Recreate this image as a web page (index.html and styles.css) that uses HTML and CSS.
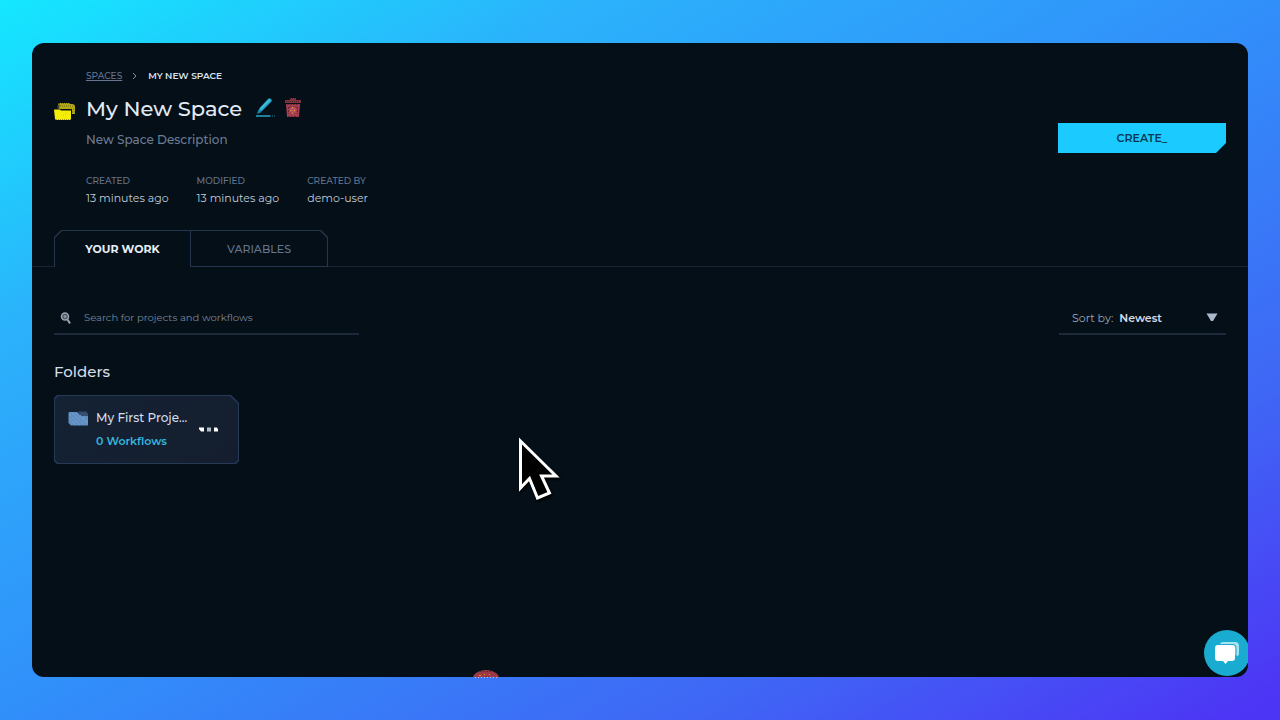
FILE: index.html
```html
<!DOCTYPE html>
<html lang="en">
<head>
<meta charset="utf-8">
<meta name="viewport" content="width=device-width, initial-scale=1">
<title>My New Space</title>
<link rel="stylesheet" href="styles.css">
</head>
<body>
<div class="window">
  <header class="header">
    <nav class="breadcrumb" aria-label="Breadcrumb">
      <a class="breadcrumb-link" href="#">SPACES</a>
      <svg class="chevron" width="6" height="8" viewBox="0 0 6 8" aria-hidden="true"><path d="M1 1 4 4 1 7" fill="none" stroke="#8090a8"/></svg>
      <span class="breadcrumb-current">MY NEW SPACE</span>
    </nav>
    <div class="header-row">
      <div class="heading">
        <div class="title-row">
          <svg class="space-icon" width="22" height="20" viewBox="0 0 22 20" aria-hidden="true">
            <path d="M4 8V4q0-2 2-2h9l1 1h2q3 0 3 3v7h-3V8z" fill="#b5aa12"/>
            <path d="M5 2.500h11M6 5h14M17 8h4M18 11h3" stroke="#6c6818" stroke-dasharray="1 1" fill="none"/>
            <path d="M3.500 8V4.500l2-1.500v5z" fill="#4b4a2c"/>
            <path d="M0 8.500h6l1 1h10V18l-1 1H2l-1-1z" fill="#f4ed05"/>
            <path d="M2 18.500h14" stroke="#a49b16" stroke-dasharray="1 1"/>
            <path d="M9 14.500l5-3" stroke="#d0c80c" stroke-dasharray="1 2"/>
          </svg>
          <h1 class="title">My New Space</h1>
          <button class="icon-button" type="button" aria-label="Edit space">
            <svg width="19" height="20" viewBox="0 0 19 20"><path d="m2 14 2-4.500 8-8.500q1.500-1.500 3 0 1.500 1.500 0 3l-9 9z" fill="#27a5c8"/><path d="m4.500 11 9-9" stroke="#61d9ef"/><path d="m1 16 1.500-4.500L6 14z" fill="#1b87a5"/><path d="M0 18h14" stroke="#25a6c8" stroke-width="1.500"/><path d="M14 18h5" stroke="#1b7f9c" stroke-dasharray="1 1"/></svg>
          </button>
          <button class="icon-button" type="button" aria-label="Delete space">
            <svg width="16" height="20" viewBox="0 0 16 20"><path d="M5 2V0h6v2h5v3H0V2z" fill="#87333d"/><path d="M1 3.500h14M5 .5h6" stroke="#4d202a" stroke-dasharray="1 1"/><path d="M1 6h14l-1 13H2z" fill="#a43f51"/><path d="M2 6.500h12M4 9h9M3 18.500h10M3.500 9v7M12.500 9v7" stroke="#6c2938" stroke-dasharray="2 1"/><circle cx="8" cy="12" r="3" fill="#bd5261"/><path d="M5 12.500h1m3 0h1m-3-3h1m-1 6h1" stroke="#d39a24"/></svg>
          </button>
        </div>
        <p class="description">New Space Description</p>
      </div>
      <button class="create" type="button">CREATE_</button>
    </div>
    <dl class="meta">
      <div class="meta-item"><dt>CREATED</dt><dd>13 minutes ago</dd></div>
      <div class="meta-item"><dt>MODIFIED</dt><dd>13 minutes ago</dd></div>
      <div class="meta-item"><dt>CREATED BY</dt><dd>demo-user</dd></div>
    </dl>
  </header>
  <div class="tab-bar">
    <div class="tabs" role="tablist">
      <button class="tab tab-active" type="button" role="tab" aria-selected="true">YOUR WORK</button>
      <button class="tab" type="button" role="tab" aria-selected="false">VARIABLES</button>
    </div>
  </div>
  <main class="content">
    <div class="filters">
      <label class="search">
        <svg width="12" height="14" viewBox="0 0 12 14" aria-hidden="true"><circle cx="5" cy="5.500" r="3.500" fill="#485463" stroke="#98a4b3" stroke-width="1.500"/><circle cx="5" cy="5.500" r="1.500" fill="#8995a4"/><path d="m7.500 8.500 2.500 4" stroke="#98a4b3" stroke-width="2"/></svg>
        <input class="search-input" type="search" aria-label="Search for projects and workflows" placeholder="Search for projects and workflows">
      </label>
      <div class="sort">
        <label for="sort">Sort by:</label>
        <select class="sort-select" id="sort"><option>Newest</option><option>Oldest</option></select>
        <svg class="sort-arrow" width="12" height="9" viewBox="0 0 12 9" aria-hidden="true"><path d="M.5.5h11l-4.500 7.500H5z" fill="#aab8c9"/></svg>
      </div>
    </div>
    <h2 class="section-title">Folders</h2>
    <div class="folders">
      <article class="card">
        <div class="card-inner">
          <svg class="folder-icon" width="21" height="15" viewBox="0 0 21 15" aria-hidden="true"><path d="M1 1h8l2 2h9v11.500H3L.5 12V2z" fill="#5f8fc2"/><path d="M10 .5h8l2 2V5H12z" fill="#334e70"/><path d="m1 3 11 11M1 7l7 7M4 2l13 12M8 2l12 11M12 4l8 7" stroke="#86a9cf" stroke-dasharray="1 1"/></svg>
          <div class="card-text">
            <h3 class="card-title">My First Proje...</h3>
            <p class="card-count">0 Workflows</p>
          </div>
          <button class="more" type="button" aria-label="More actions"><svg width="20" height="5" viewBox="0 0 20 5"><path d="M0 .5h5v4H2L0 2z" fill="#fff"/><path d="M8 .5h4v4H8z" fill="#b8bec8"/><path d="M15 .5h3l1 2v2h-4z" fill="#fff"/></svg></button>
        </div>
      </article>
    </div>
  </main>
  <button class="chat" type="button" aria-label="Open chat">
    <svg width="24" height="24" viewBox="0 0 24 24"><path d="M5 4q0-3 3-3h12q4 0 4 4v7q0 3-2 3" fill="#a8e4ef"/><path d="M5 3.500h13q3 0 3 3V17" fill="none" stroke="#1aabd0"/><path d="M3 4h14q3 0 3 3v10q0 3-3 3h-4l-2.500 3L8 20H3q-3 0-3-3V7q0-3 3-3z" fill="#fff"/></svg>
  </button>
</div>
<svg class="pointer" width="46" height="68" viewBox="0 0 46 68" aria-hidden="true"><path d="M4.500 7v47l9-9.500 8 19.500 12-5-8-17H40z" fill="#000" stroke="#fff" stroke-width="3"/></svg>
<svg class="blob" width="26" height="9" viewBox="0 0 26 9" aria-hidden="true"><path d="M0 7q1-4 7-6 6-2 12 0 6 2 7 6z" fill="#9c3944"/><path d="M7 1.500h12" stroke="#6c2932" stroke-dasharray="2 1"/><path d="M6 5.500h2m3-1h1m4 0h1" stroke="#d39a24"/><path d="M2 7.500h22" stroke="#f0b8d8" stroke-dasharray="1 2"/></svg>
</body>
</html>
```
FILE: styles.css
```css
* { box-sizing: border-box; }
body {
  margin: 0;
  min-height: 100vh;
  padding: 43px 32px;
  display: flex;
  position: relative;
  font-family: Montserrat, Inter, sans-serif;
  color: #d5deea;
  background: linear-gradient(to bottom right, #14e8ff 0%, #2bb2fb 23%, #318ffa 50%, #3f66f5 77%, #4d35f5 98%);
}
button, input, select { font: inherit; color: inherit; border: 0; padding: 0; background: none; }
h1, h2, h3, p, dl, dd { margin: 0; }
svg { display: block; flex: none; }
.window {
  flex: 1;
  min-width: 0;
  position: relative;
  overflow: hidden;
  border-radius: 12px;
  background: #040f18;
}
.header { padding: 26px 22px 0 54px; }
.breadcrumb { display: flex; align-items: center; gap: 10px; font-size: 9px; line-height: 14px; font-weight: 500; }
.breadcrumb-link { color: #65758e; }
.breadcrumb-current { font-weight: 600; color: #dce4ee; }
.header-row { display: flex; justify-content: space-between; }
.heading { padding-top: 10px; }
.title-row { display: flex; align-items: center; margin-left: -32px; }
.space-icon { margin: 4px 10px 0 0; }
.title { margin-right: 14px; font-size: 21px; line-height: 32px; font-weight: 500; color: #e2eaf4; }
.icon-button { margin: 0 10px 2px 0; cursor: pointer; }
.description { margin-top: 5px; font-size: 12px; line-height: 20px; font-weight: 500; color: #6d7c94; }
.create {
  align-self: flex-end;
  width: 168px;
  height: 30px;
  margin-bottom: -3px;
  background: #1bcaff;
  color: #073852;
  font-size: 11px;
  font-weight: 600;
  clip-path: polygon(0 0, 100% 0, 100% 20px, calc(100% - 10px) 100%, 0 100%);
}
.meta { display: flex; gap: 28px; margin-top: 24px; }
.meta dt { font-size: 9px; line-height: 14px; font-weight: 500; color: #65758e; }
.meta dd { font-size: 11px; line-height: 20px; color: #c2ccd9; }
.tab-bar { display: flex; margin-top: 22px; padding-left: 22px; border-bottom: 1px solid #182234; }
.tabs {
  display: grid;
  grid-template-columns: 135px 136px;
  gap: 1px;
  align-items: start;
  padding: 1px 1px 0;
  margin-bottom: -1px;
  background: #26354e;
  clip-path: polygon(0 7px, 7px 0, calc(100% - 7px) 0, 100% 7px, 100% 100%, 0 100%);
}
.tab { height: 35px; background: #040f18; color: #65758e; font-size: 11px; font-weight: 500; }
.tab:first-child { height: 36px; clip-path: polygon(0 7px, 7px 0, 100% 0, 100% 100%, 0 100%); }
.tab:last-child { clip-path: polygon(0 0, calc(100% - 7px) 0, 100% 7px, 100% 100%, 0 100%); }
.tab.tab-active { color: #e8eff8; font-weight: 700; }
.content { padding: 35px 22px; }
.filters { display: flex; justify-content: space-between; }
.search, .sort { display: flex; align-items: center; height: 33px; border-bottom: 2px solid #1c293a; }
.search { width: 305px; gap: 12px; padding-left: 6px; }
.search-input { flex: 1; min-width: 0; outline: 0; font-size: 10px; }
.search-input::placeholder { color: #7a879a; opacity: 1; }
.sort { position: relative; width: 167px; padding-left: 13px; gap: 6px; font-size: 11px; color: #9aa8ba; }
.sort-select { flex: 1; min-width: 0; appearance: none; outline: 0; font-weight: 600; color: #d2dce8; }
.sort-arrow { position: absolute; right: 8px; top: 11px; pointer-events: none; }
.section-title { margin-top: 25px; font-size: 15px; line-height: 24px; font-weight: 500; }
.folders { display: flex; flex-wrap: wrap; gap: 20px; margin-top: 11px; }
.card {
  width: 185px;
  padding: 1px;
  background: #263a57;
  clip-path: polygon(0 3px, 3px 0, calc(100% - 8px) 0, 100% 8px, 100% calc(100% - 3px), calc(100% - 3px) 100%, 3px 100%, 0 calc(100% - 3px));
}
.card-inner {
  display: flex;
  align-items: flex-start;
  padding: 12px 19px 13px 13px;
  background: linear-gradient(135deg, #142234, #141e2e);
  clip-path: polygon(0 3px, 3px 0, calc(100% - 8px) 0, 100% 8px, 100% calc(100% - 3px), calc(100% - 3px) 100%, 3px 100%, 0 calc(100% - 3px));
}
.folder-icon { margin: 3px 7px 0 0; }
.card-text { flex: 1; min-width: 0; }
.card-title { font-size: 12px; line-height: 20px; font-weight: 500; white-space: nowrap; }
.card-count { margin-top: 4px; font-size: 11px; line-height: 18px; font-weight: 600; color: #36b5df; }
.more { align-self: center; margin-left: 8px; }
.chat {
  position: absolute;
  right: -2px;
  bottom: 1px;
  width: 46px;
  height: 46px;
  border-radius: 50%;
  background: #1aabd0;
  display: grid;
  place-items: center;
}
.pointer { position: absolute; left: 516px; top: 434px; filter: drop-shadow(1px 2px 1px #000); }
.blob { position: absolute; left: 473px; bottom: 41px; }
```
